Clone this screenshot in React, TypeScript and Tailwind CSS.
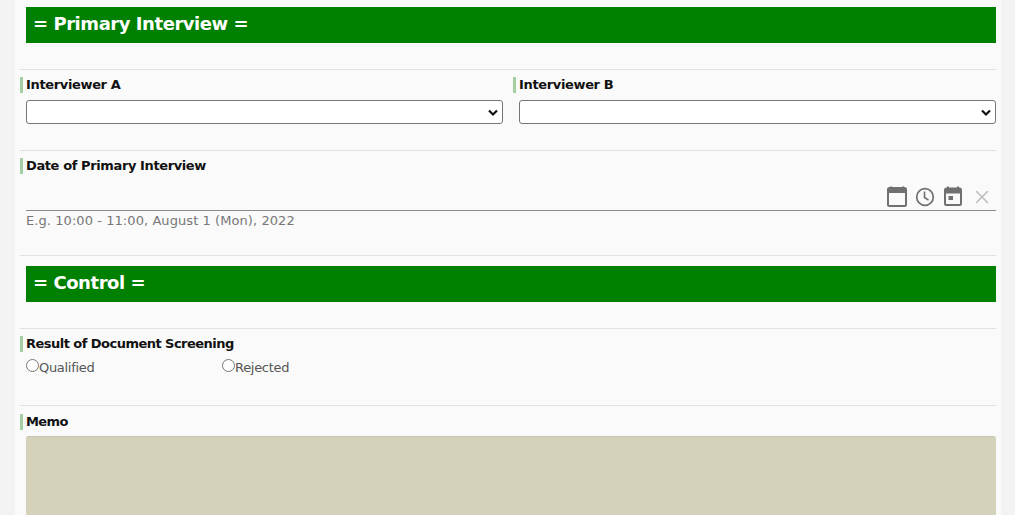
import { X } from "lucide-react";

const font = { fontFamily: '"DejaVu Sans", Verdana, sans-serif' };

const FieldLabel = ({ text, tracking = "tracking-[-0.35px]" }: { text: string; tracking?: string }) => (
  <div className={`border-l-[3px] border-[#a3cfa3] pl-[3px] pb-[2px] h-[16px] flex items-center text-[13px] leading-[17px] font-bold text-[#111] whitespace-nowrap ${tracking}`}>
    {text}
  </div>
);

const SectionBar = ({ text }: { text: string }) => (
  <div className="ml-[6px] h-[36px] bg-[#008000] pl-[7px] pb-[3px] flex items-center text-[18px] font-bold text-white tracking-[-0.45px]">
    {text}
  </div>
);

const Select = () => (
  <div className="relative ml-[6px] h-[24px] bg-white border border-[#767676] rounded-[3px]">
    <svg className="absolute right-[3px] top-[7px]" width="12" height="10" viewBox="0 0 12 10">
      <path d="M2 2.5 L6 6.5 L10 2.5" fill="none" stroke="#111" strokeWidth="2.2" />
    </svg>
  </div>
);

const Divider = () => <div className="h-px bg-[#e2e2e2]" />;

const Radio = ({ text, width }: { text: string; width: string }) => (
  <label className={`flex items-start text-[13px] leading-[17px] text-[#555] tracking-[-0.3px] ${width}`}>
    <span className="w-[13px] h-[13px] rounded-full border border-[#767676] bg-white" />
    {text}
  </label>
);

const App = () => {
  return (
    <div className="h-[515px] overflow-hidden bg-[#f3f3f3] pl-[15px] pr-[14px]" style={font}>
      <div className="h-full bg-[#fafafa] pl-[5px] pr-[5px] pt-[7px]">
        <SectionBar text="= Primary Interview =" />
        <div className="mt-[26px]"><Divider /></div>

        <div className="mt-[7px] flex gap-[10px]">
          <div className="w-[483px]">
            <FieldLabel text="Interviewer A" />
            <div className="mt-[7px]"><Select /></div>
          </div>
          <div className="flex-1">
            <FieldLabel text="Interviewer B" />
            <div className="mt-[7px]"><Select /></div>
          </div>
        </div>

        <div className="mt-[26px]"><Divider /></div>
        <div className="mt-[7px]"><FieldLabel text="Date of Primary Interview" tracking="tracking-[-0.39px]" /></div>

        <div className="ml-[6px] mt-[10px] h-[27px] border-b border-[#8a8a8a] flex justify-end items-center gap-[6px] pr-[3px] pb-[1px]">
          <svg width="22" height="24" viewBox="0 0 22 24" fill="none">
            <path d="M5 1.5v3M17 1.5v3" stroke="#707070" strokeWidth="2" />
            <rect x="2" y="3" width="18" height="18" rx="1.5" stroke="#707070" strokeWidth="2" />
            <rect x="2" y="3" width="18" height="5" fill="#707070" />
          </svg>
          <svg width="22" height="22" viewBox="0 0 22 22" fill="none">
            <circle cx="11" cy="11" r="8.3" stroke="#707070" strokeWidth="1.7" />
            <path d="M10.5 5.5v6l4 2.6" stroke="#707070" strokeWidth="1.6" />
          </svg>
          <svg width="22" height="24" viewBox="0 0 22 24" fill="none">
            <path d="M6 1.5v3M16 1.5v3" stroke="#707070" strokeWidth="2" />
            <rect x="3" y="3.5" width="16" height="16.5" rx="1.5" stroke="#707070" strokeWidth="2" />
            <rect x="3" y="3.5" width="16" height="5" fill="#707070" />
            <rect x="6.5" y="11" width="4.5" height="4" fill="#707070" />
          </svg>
          <X size={22} strokeWidth={1.7} className="ml-[1px] text-[#bdbdbd]" />
        </div>

        <div className="ml-[6px] mt-[1px] text-[13px] leading-[17px] text-[#777] tracking-[0.07px]">
          E.g. 10:00 - 11:00, August 1 (Mon), 2022
        </div>

        <div className="mt-[26px]"><Divider /></div>
        <div className="mt-[10px]"><SectionBar text="= Control =" /></div>
        <div className="mt-[26px]"><Divider /></div>

        <div className="mt-[7px]"><FieldLabel text="Result of Document Screening" tracking="tracking-[-0.53px]" /></div>
        <div className="ml-[6px] mt-[7px] flex">
          <Radio text="Qualified" width="w-[196px]" />
          <Radio text="Rejected" width="w-[196px]" />
        </div>

        <div className="mt-[29px]"><Divider /></div>
        <div className="mt-[8px]"><FieldLabel text="Memo" tracking="tracking-[-0.6px]" /></div>
        <div className="ml-[6px] mt-[6px] h-[200px] bg-[#d4d2bb] rounded-[3px] border-t border-[#c6c4ae]" />
      </div>
    </div>
  );
};

export default App;
